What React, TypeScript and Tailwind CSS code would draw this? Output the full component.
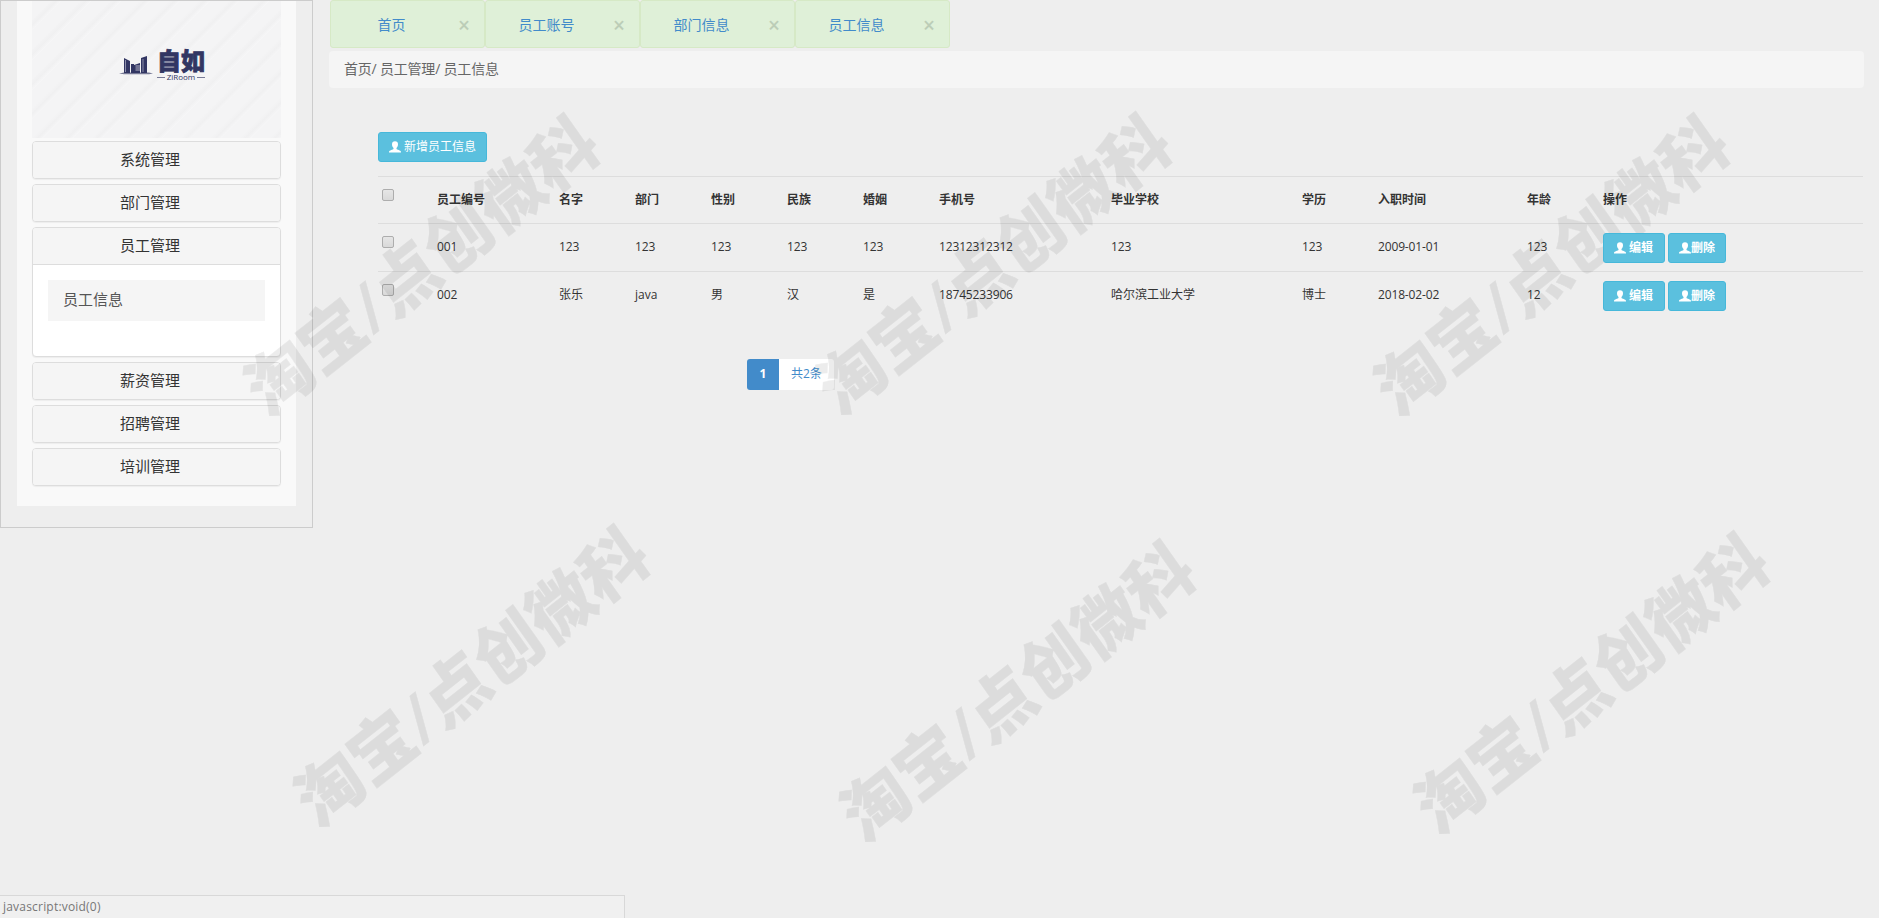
import { ReactNode } from 'react';
import clsx from 'clsx';

const tabs = ['首页', '员工账号', '部门信息', '员工信息'];

const columns = [
  { title: '员工编号', width: 'w-[122px]' },
  { title: '名字', width: 'w-[76px]' },
  { title: '部门', width: 'w-[76px]' },
  { title: '性别', width: 'w-[76px]' },
  { title: '民族', width: 'w-[76px]' },
  { title: '婚姻', width: 'w-[76px]' },
  { title: '手机号', width: 'w-[172px]' },
  { title: '毕业学校', width: 'w-[191px]' },
  { title: '学历', width: 'w-[76px]' },
  { title: '入职时间', width: 'w-[149px]' },
  { title: '年龄', width: 'w-[76px]' },
];

const employees = [
  ['001', '123', '123', '123', '123', '123', '12312312312', '123', '123', '2009-01-01', '123'],
  ['002', '张乐', 'java', '男', '汉', '是', '18745233906', '哈尔滨工业大学', '博士', '2018-02-02', '12'],
];

const watermarks = [
  'left-[421px] top-[265px]',
  'left-[993px] top-[264px]',
  'left-[1551px] top-[265px]',
  'left-[471px] top-[676px]',
  'left-[1017px] top-[691px]',
  'left-[1591px] top-[683px]',
];

function UserIcon() {
  return (
    <svg viewBox="0 0 12 12" className="w-3 h-3 shrink-0" fill="currentColor">
      <path d="M6 .3C4 .3 3 1.500 3 3.200c0 1.700.7 2.900 1.500 3.700v1C4.200 8.700.2 9 0 10.800V11.500h12v-.7C11.800 9 7.800 8.700 7.500 7.900v-1C8.300 6.100 9 4.900 9 3.200 9 1.500 8 .3 6 .3Z" />
    </svg>
  );
}

function Button({ children, className }: { children: ReactNode; className?: string }) {
  return (
    <button
      className={clsx(
        'relative z-10 flex items-center h-[30px] rounded-[3px] border border-[#46b8da] bg-[#5bc0de] text-white text-xs whitespace-nowrap',
        className
      )}
    >
      {children}
    </button>
  );
}

function Checkbox() {
  return (
    <input
      type="checkbox"
      className="appearance-none block w-3 h-3 ml-[4px] mt-3 rounded-[2px] border border-[#adadad] bg-linear-to-b from-[#e6e6e6] to-[#d9d9d9]"
    />
  );
}

function Logo() {
  return (
    <div className="h-[137px] flex overflow-hidden bg-[repeating-linear-gradient(135deg,#f4f4f5_0px,#f4f4f5_13px,#f0f0f1_17px,#f6f6f7_21px)]">
      <svg viewBox="0 0 34 20" className="w-[34px] h-5 ml-[87px] mt-[55px]" fill="#323663">
        <path d="M0 17.500L5 16.500H30L34 17.500L30 18.300H5Z" fill="#777a96" />
        <path d="M5 2L11 5V17H5ZM12 8H15V17H12ZM15 9L21 7V17H15ZM22 2L28 0V17H22Z" />
        <path d="M6.500 4V16M24 3V16" stroke="#8d90ab" strokeWidth="1" />
        <path d="M16.500 10H21M16.500 12H21M16.500 14H21" stroke="#d5d6e0" strokeWidth=".8" />
      </svg>
      <div className="w-12 ml-1 mt-[48px] text-[#323663]">
        <div className="text-2xl leading-6 font-black [-webkit-text-stroke:0.8px_#323663]">自如</div>
        <div className="flex items-center justify-center gap-0.5 text-[8px] leading-[8px]">
          <span className="w-2 h-px bg-[#777a96]" />
          <span>ZiRoom</span>
          <span className="w-2 h-px bg-[#777a96]" />
        </div>
      </div>
    </div>
  );
}

function MenuPanel({ title, children }: { title: string; children?: ReactNode }) {
  return (
    <div className="rounded-[4px] border border-[#ddd] bg-white shadow-[0_1px_1px_rgba(0,0,0,0.05)] overflow-hidden">
      <div className="h-9 pl-[87px] bg-[#f5f5f5] text-[15px] leading-[34px] text-[#333]">{title}</div>
      {children}
    </div>
  );
}

function Sidebar() {
  return (
    <aside className="w-[313px] h-[528px] shrink-0 border border-[#ccc] px-4">
      <div className="h-[505px] px-[15px] bg-[#f9f9f9]">
        <Logo />
        <div className="flex flex-col gap-[5px] pt-[3px]">
          <MenuPanel title="系统管理" />
          <MenuPanel title="部门管理" />
          <MenuPanel title="员工管理">
            <div className="h-[92px] border-t border-[#ddd] px-[15px] pt-[15px]">
              <a className="block h-[41px] pl-[15px] bg-[#f5f5f5] text-[15px] leading-[39px] text-[#555]">员工信息</a>
            </div>
          </MenuPanel>
          <MenuPanel title="薪资管理" />
          <MenuPanel title="招聘管理" />
          <MenuPanel title="培训管理" />
        </div>
      </div>
    </aside>
  );
}

function EmployeeTable() {
  return (
    <table className="w-[1485px] table-fixed border-collapse text-xs text-[#333]">
      <thead>
        <tr className="h-[47px] border-t border-[#ddd] text-left">
          <th className="w-[51px] p-0 align-top">
            <Checkbox />
          </th>
          {columns.map((col) => (
            <th key={col.title} className={clsx('px-2 py-0 font-bold', col.width)}>
              {col.title}
            </th>
          ))}
          <th className="px-2 py-0 font-bold">操作</th>
        </tr>
      </thead>
      <tbody>
        {employees.map((row) => (
          <tr key={row[0]} className="h-12 border-t border-[#ddd]">
            <td className="p-0 align-top">
              <Checkbox />
            </td>
            {row.map((cell, i) => (
              <td key={i} className={clsx('px-2 pt-0 pb-0.5', /^[\d-]+$/.test(cell) && 'tracking-[-0.15px]')}>
                {cell}
              </td>
            ))}
            <td className="px-2 py-0">
              <div className="flex gap-[3px] pt-px">
                <Button className="w-[62px] pl-[10px] gap-[3px] font-bold">
                  <UserIcon />
                  编辑
                </Button>
                <Button className="w-[58px] pl-[10px] font-bold">
                  <UserIcon />
                  删除
                </Button>
              </div>
            </td>
          </tr>
        ))}
      </tbody>
    </table>
  );
}

export default function App() {
  return (
    <div className="relative flex w-[1879px] h-[918px] overflow-hidden bg-[#eee] font-['Open_Sans','Noto_Sans_CJK_SC',sans-serif]">
      <Sidebar />

      <main className="flex-1 pl-4">
        <nav className="flex h-12 pl-px">
          {tabs.map((tab) => (
            <div
              key={tab}
              className="relative flex items-center justify-center w-[155px] h-12 pr-8 pt-0.5 rounded-[3px] border border-[#d6e9c6] bg-[#dff0d8] text-sm text-[#428bca]"
            >
              {tab}
              <span className="absolute right-[14px] top-[10px] text-[21px] leading-[28px] font-semibold text-[#bccdb7]">×</span>
            </div>
          ))}
        </nav>

        <div className="h-[37px] w-[1535px] mt-[3px] pl-[15px] rounded-[4px] bg-[#f5f5f5] text-sm leading-[36px] tracking-[-0.2px] text-[#666]">
          首页/ 员工管理/ 员工信息
        </div>

        <div className="pl-[49px] pt-11">
          <Button className="w-[109px] pl-[10px] gap-[3px]">
            <UserIcon />
            新增员工信息
          </Button>
          <div className="pt-[14px]">
            <EmployeeTable />
          </div>
          <div className="flex h-[31px] mt-[39px] ml-[369px] text-xs leading-[30px]">
            <span className="w-8 rounded-l-[3px] bg-[#428bca] text-center font-bold text-white">1</span>
            <span className="w-[55px] rounded-r-[3px] bg-white pl-3 text-[#428bca]">共2条</span>
          </div>
        </div>
      </main>

      <div className="absolute left-0 bottom-0 w-[625px] h-[23px] border-t border-r border-[#d8d8d8] bg-[#f0f0f0] pl-[3px] text-xs leading-[21px] tracking-[0.2px] text-[#777]">
        javascript:void(0)
      </div>

      {watermarks.map((position) => (
        <div
          key={position}
          className={clsx(
            'absolute -translate-x-1/2 -translate-y-1/2 pointer-events-none select-none whitespace-nowrap opacity-7',
            position
          )}
        >
          <div className="-rotate-[38.3deg] -skew-x-3 text-[67px] leading-none font-black text-black [-webkit-text-stroke:0.4px_black]">
            淘宝<span className="font-semibold">/</span>点创微科
          </div>
        </div>
      ))}
    </div>
  );
}
